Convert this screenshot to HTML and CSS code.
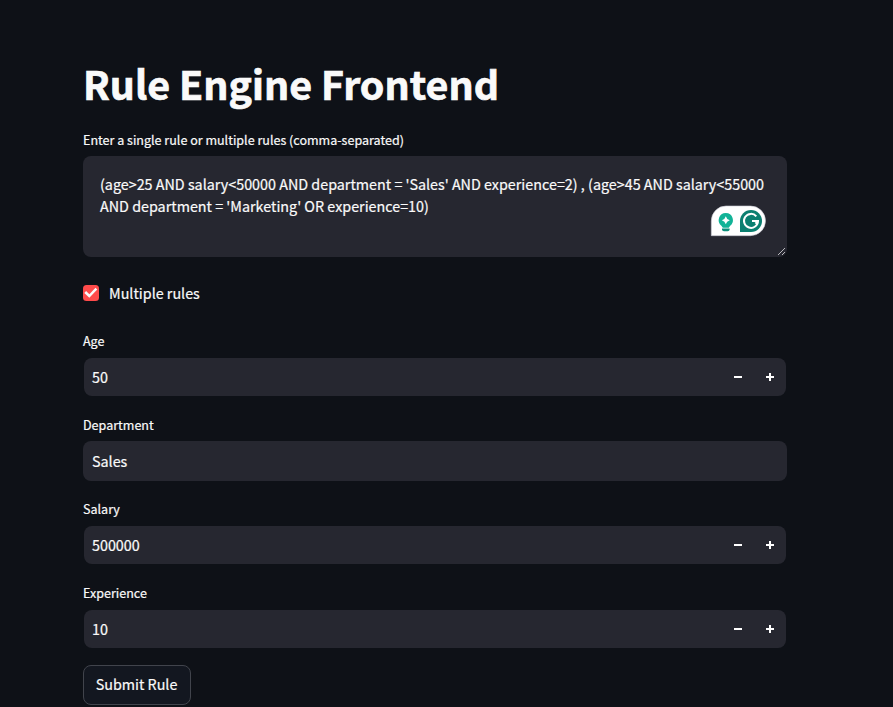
FILE: index.html
```
<!DOCTYPE html>
<html lang="en">
<head>
<meta charset="utf-8">
<title>Rule Engine Frontend</title>
<link rel="stylesheet" href="styles.css">
</head>
<body>
<main class="app">
  <h1 class="title">Rule Engine Frontend</h1>
  <section class="field">
    <div class="label">Enter a single rule or multiple rules (comma-separated)</div>
    <div class="control area">
      <span class="area-text">(age&gt;25 AND salary&lt;50000 AND department = 'Sales' AND experience=2) , (age&gt;45 AND salary&lt;55000<br>AND department = 'Marketing' OR experience=10)</span>
      <svg class="assist" width="56" height="32" viewBox="0 0 56 32">
        <path d="M1.300 30.700V16A14.700 14.850 0 0 1 16 1H40.500A15 14.850 0 0 1 40.500 30.700Z" fill="#fff" stroke="#c9cad3" stroke-width=".6"/>
        <path d="M15.800 8a7.200 7.200 0 0 0-4.200 13l1.200 1.700h6L20 21a7.200 7.200 0 0 0-4.200-13Z" fill="#12b397"/>
        <path d="M15.800 11.200q.8 3.200 4 4-3.200.8-4 4-.8-3.200-4-4 3.200-.8 4-4Z" fill="#fff"/>
        <path d="M12 23.500h7.600v.8q0 2-2 2H14q-2 0-2-2Z" fill="#0b8f7a"/>
        <path d="M30 27V16a11 11 0 1 1 11 11Z" fill="#0b7f70"/>
        <path d="M46.300 11.300A7 7 0 1 0 48 16h-6M48 16l-2.600 2.600" fill="none" stroke="#fff" stroke-width="2"/>
      </svg>
      <svg class="grip" width="9" height="9" viewBox="0 0 9 9"><path d="M1 8 8 1M5 8 8 5" fill="none" stroke="#b8b8bd" stroke-width="1"/></svg>
    </div>
  </section>
  <div class="check">
    <svg width="16" height="16" viewBox="0 0 16 16"><rect width="16" height="16" rx="3.500" fill="#ff4b4b"/><path d="M2.200 7 6.300 11 13.400 3.700" fill="none" stroke="#fafafa" stroke-width="2.500"/></svg>
    <span>Multiple rules</span>
  </div>
  <section class="field">
    <div class="label">Age</div>
    <div class="control number"><span>50</span><svg class="steps" width="42" height="10" viewBox="0 0 42 10"><path d="M1 4h8v2H1zM33 4h3V1h2v3h3v2h-3v3h-2V6h-3z" fill="#fff"/></svg></div>
  </section>
  <section class="field">
    <div class="label">Department</div>
    <div class="control"><span>Sales</span></div>
  </section>
  <section class="field">
    <div class="label">Salary</div>
    <div class="control number"><span>500000</span><svg class="steps" width="42" height="10" viewBox="0 0 42 10"><path d="M1 4h8v2H1zM33 4h3V1h2v3h3v2h-3v3h-2V6h-3z" fill="#fff"/></svg></div>
  </section>
  <section class="field">
    <div class="label">Experience</div>
    <div class="control number"><span>10</span><svg class="steps" width="42" height="10" viewBox="0 0 42 10"><path d="M1 4h8v2H1zM33 4h3V1h2v3h3v2h-3v3h-2V6h-3z" fill="#fff"/></svg></div>
  </section>
  <button class="submit">Submit Rule</button>
</main>
</body>
</html>
```
FILE: styles.css
```
* { box-sizing: border-box; }
body {
  margin: 0;
  height: 707px;
  overflow: hidden;
  background: #0e1117;
  color: #fafafa;
  font-family: "Noto Sans CJK SC", "Noto Sans", sans-serif;
  font-size: 14.34px;
  line-height: 22px;
  -webkit-text-stroke: 0.2px #fafafa;
}
.app { width: 704px; margin-left: 83px; padding-top: 56px; }
.title {
  margin: 0;
  height: 72px;
  font-size: 39.36px;
  line-height: 53px;
  font-weight: 700;
  white-space: nowrap;
  -webkit-text-stroke: 0.7px #fafafa;
}
.field { margin-bottom: 16px; }
.label { height: 28px; font-size: 12.54px; line-height: 24px; white-space: nowrap; }
.control {
  display: flex;
  align-items: center;
  justify-content: space-between;
  height: 40px;
  padding: 0 9px;
  border-radius: 8px;
  background: #262730;
}
.number { height: 38px; margin: 0 1px 1px; padding: 0 11px 0 8px; }
.field:has(.number) { height: 68px; }
.field:has(.number) .label { height: 29px; }
.area { position: relative; height: 101px; align-items: flex-start; padding: 17px; }
.area-text { line-height: 22.4px; white-space: nowrap; }
.assist { position: absolute; left: 627px; top: 49px; }
.grip { position: absolute; right: 1px; bottom: 1px; }
.check { display: flex; align-items: center; gap: 10px; height: 40px; margin-bottom: 16px; }
.submit {
  display: block;
  width: 108px;
  height: 40px;
  padding: 0 1px 2px 0;
  border: 1px solid #41444c;
  border-radius: 8px;
  background: #131720;
  color: inherit;
  font: inherit;
}
```
